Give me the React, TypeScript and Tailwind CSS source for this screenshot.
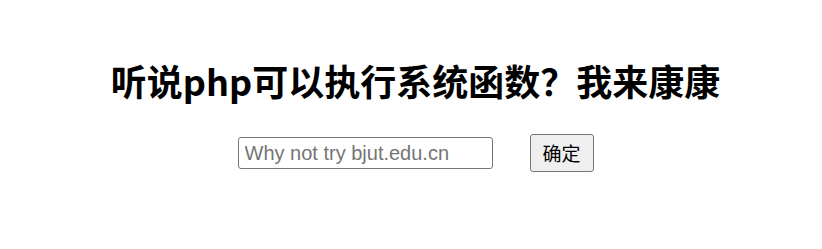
export default function App() {
  return (
    <div className="h-[249px] w-full bg-white pl-[9px] pt-[58px] font-['Liberation_Sans','Noto_Sans_CJK_SC',sans-serif] text-black">
      <h1 className="text-center font-['Noto_Sans_CJK_SC',sans-serif] text-[36px] font-bold leading-[44px]">
        听说php可以执行系统函数？我来康康
      </h1>
      <form className="mt-[32px] flex items-center justify-center gap-[37px]">
        <input
          type="text"
          placeholder="Why not try bjut.edu.cn"
          className="h-[32px] w-[255px] rounded-[3px] border border-[#767676] px-[6px] font-['Liberation_Sans',sans-serif] text-[20px] outline-none placeholder:text-[#757575]"
        />
        <button
          type="button"
          className="h-[38px] w-[64px] rounded-[3px] border border-[#767676] bg-[#efefef] font-['Noto_Sans_CJK_SC',sans-serif] text-[19px]"
        >
          确定
        </button>
      </form>
    </div>
  );
}
